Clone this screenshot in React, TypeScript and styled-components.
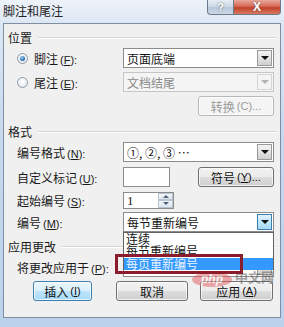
import React from 'react';
import styled, { createGlobalStyle } from 'styled-components';

const GlobalStyle = createGlobalStyle`
  html, body {
    margin: 0;
    padding: 0;
    background: #cfdff0;
  }
  body {
    font-family: 'Noto Sans CJK SC', 'Liberation Sans', sans-serif;
    font-size: 12px;
    color: #1a1a1a;
  }
`;

const Window = styled.div`
  position: relative;
  width: 284px;
  height: 327px;
  overflow: hidden;
  background: linear-gradient(180deg, #eef3f9 0px, #dce7f4 24px, #c6d8ee 140px, #bcd2ec 327px);
  display: flex;
  flex-direction: column;
`;

const TitleBar = styled.div`
  height: 23px;
  display: flex;
  align-items: flex-start;
  justify-content: space-between;
  padding-left: 3px;
  box-sizing: border-box;
`;

const Title = styled.div`
  font-size: 12px;
  line-height: 22px;
  color: #222;
`;

const Caps = styled.div`
  display: flex;
  margin-right: 3px;
`;

const CapButton = styled.div<{ $close?: boolean }>`
  width: ${p => (p.$close ? 47 : 27)}px;
  height: 15px;
  box-sizing: border-box;
  border: 1px solid #6d7a8c;
  border-top: none;
  border-left: ${p => (p.$close ? 'none' : '1px solid #6d7a8c')};
  border-radius: ${p => (p.$close ? '0 0 4px 0' : '0 0 0 4px')};
  background: ${p =>
    p.$close
      ? 'linear-gradient(180deg, #e9a99c 0%, #d46a55 45%, #c1412a 55%, #d9795f 100%)'
      : 'linear-gradient(180deg, #e7edf5 0%, #cfdae7 45%, #b9c8da 55%, #cbd8e7 100%)'};
  color: #fff;
  font-family: 'Liberation Sans', sans-serif;
  font-weight: bold;
  font-size: ${p => (p.$close ? 12 : 11)}px;
  line-height: 14px;
  text-align: center;
  text-shadow: 0 0 2px #555;
`;

const Panel = styled.div`
  margin: 0 3px;
  height: 295px;
  box-sizing: border-box;
  border: 1px solid #7f8ea3;
  background: #f0f0f0;
  display: flex;
  flex-direction: column;
  position: relative;
`;

const SectionHead = styled.div<{ $top: number }>`
  margin-top: ${p => p.$top}px;
  height: 16px;
  display: flex;
  align-items: center;
  padding-left: 4px;
  padding-right: 4px;
  gap: 6px;
  line-height: 16px;

  &::after {
    content: '';
    flex: 1;
    height: 0;
    border-top: 1px solid #d5d5d5;
    border-bottom: 1px solid #ffffff;
  }
`;

const Row = styled.div<{ $top: number; $h?: number }>`
  margin-top: ${p => p.$top}px;
  height: ${p => p.$h ?? 20}px;
  display: grid;
  grid-template-columns: 119px 151px;
  align-items: center;
  position: relative;
`;

const Label = styled.div`
  padding-left: 13px;
  display: flex;
  align-items: center;
  gap: 6px;
  white-space: nowrap;
`;

const Key = styled.span`
  font-family: 'Liberation Sans', sans-serif;
  font-size: 11px;
  margin-left: 2px;
`;

const Radio = styled.span<{ $checked?: boolean }>`
  width: 11px;
  height: 11px;
  border-radius: 50%;
  box-sizing: border-box;
  border: 1px solid #8e9aa8;
  background: radial-gradient(circle at 50% 40%, #ffffff 0%, #e8ecf0 70%, #cfd5dc 100%);
  position: relative;

  &::after {
    content: '';
    display: ${p => (p.$checked ? 'block' : 'none')};
    position: absolute;
    left: 2px;
    top: 2px;
    width: 5px;
    height: 5px;
    border-radius: 50%;
    background: radial-gradient(circle at 40% 35%, #a6d4f5 0%, #2b73b3 60%, #1a4f86 100%);
  }
`;

const Select = styled.div<{ $disabled?: boolean }>`
  height: 20px;
  box-sizing: border-box;
  border: 1px solid ${p => (p.$disabled ? '#c6c6c6' : '#8c8c8c')};
  background: ${p => (p.$disabled ? '#f4f4f4' : '#ffffff')};
  color: ${p => (p.$disabled ? '#8a8a8a' : '#111')};
  display: flex;
  align-items: center;
  justify-content: space-between;
  padding: 0 1px 0 3px;
  white-space: nowrap;
`;

const Arrow = styled.span<{ $state?: 'normal' | 'hot' | 'disabled' }>`
  width: 15px;
  height: 16px;
  box-sizing: border-box;
  border: 1px solid
    ${p => (p.$state === 'hot' ? '#3c7fb1' : p.$state === 'disabled' ? '#d6d6d6' : '#9a9a9a')};
  background: ${p =>
    p.$state === 'hot'
      ? 'linear-gradient(180deg, #e6f4fc 0%, #bee6fd 50%, #a7d9f5 100%)'
      : p.$state === 'disabled'
      ? '#f4f4f4'
      : 'linear-gradient(180deg, #f2f2f2 0%, #e4e4e4 50%, #d0d0d0 100%)'};
  display: flex;
  align-items: center;
  justify-content: center;

  &::after {
    content: '';
    border-left: 4px solid transparent;
    border-right: 4px solid transparent;
    border-top: 4px solid ${p => (p.$state === 'disabled' ? '#b4b4b4' : '#111')};
  }
`;

const Button = styled.div<{ $width: number; $left?: number; $default?: boolean; $disabled?: boolean }>`
  width: ${p => p.$width}px;
  margin-left: ${p => p.$left ?? 0}px;
  height: 20px;
  box-sizing: border-box;
  border: 1px solid ${p => (p.$default ? '#3c7fb1' : p.$disabled ? '#b5b9bd' : '#707070')};
  border-radius: 3px;
  background: ${p =>
    p.$disabled
      ? '#f4f4f4'
      : p.$default
      ? 'linear-gradient(180deg, #eaf6fd 0%, #d9f0fc 50%, #bee6fd 50%, #a7d9f5 100%)'
      : 'linear-gradient(180deg, #f2f2f2 0%, #ebebeb 50%, #dddddd 50%, #cfcfcf 100%)'};
  box-shadow: inset 0 0 0 1px rgba(255, 255, 255, 0.7);
  color: ${p => (p.$disabled ? '#9a9a9a' : '#111')};
  display: flex;
  align-items: center;
  justify-content: center;
  white-space: nowrap;
`;

const Right = styled.div`
  display: flex;
  justify-content: space-between;
  align-items: center;
`;

const TextBox = styled.div`
  width: 47px;
  height: 20px;
  box-sizing: border-box;
  border: 1px solid #8c8c8c;
  background: #fff;
`;

const Spinner = styled.div`
  width: 51px;
  height: 17px;
  box-sizing: border-box;
  border: 1px solid #8c8c8c;
  background: #fff;
  display: flex;
  justify-content: space-between;
  padding-left: 3px;
  line-height: 15px;
  font-family: 'Liberation Serif', serif;
  font-size: 13px;
`;

const SpinButtons = styled.div`
  width: 15px;
  display: flex;
  flex-direction: column;
`;

const SpinPart = styled.span<{ $down?: boolean }>`
  flex: 1;
  box-sizing: border-box;
  border: 1px solid #b8c4d0;
  background: linear-gradient(180deg, #f3f7fb 0%, #dde6ef 100%);
  display: flex;
  align-items: center;
  justify-content: center;

  &::after {
    content: '';
    border-left: 3px solid transparent;
    border-right: 3px solid transparent;
    ${p => (p.$down ? 'border-top: 3px solid #4d6178;' : 'border-bottom: 3px solid #4d6178;')}
  }
`;

const DropList = styled.div`
  position: absolute;
  left: 119px;
  top: 20px;
  width: 151px;
  height: 38px;
  box-sizing: border-box;
  border: 1px solid #646464;
  border-bottom: none;
  background: #fff;
  z-index: 2;
  display: flex;
  flex-direction: column;
`;

const Item = styled.div<{ $selected?: boolean }>`
  height: 12px;
  line-height: 12px;
  margin-top: ${p => (p.$selected ? 1 : 0)}px;
  padding-left: 2px;
  background: ${p => (p.$selected ? '#3399ff' : 'transparent')};
  color: ${p => (p.$selected ? '#e8f2ff' : '#111')};
  white-space: nowrap;
`;

const Marker = styled.div`
  position: absolute;
  left: 111px;
  top: 42px;
  width: 128px;
  height: 20px;
  box-sizing: border-box;
  border: 3px solid #8b1c2c;
  z-index: 3;
`;

const ButtonRow = styled.div`
  margin-top: 4px;
  display: flex;
  padding-left: 29px;
`;

const Watermark = styled.div`
  position: absolute;
  right: 6px;
  bottom: 33px;
  display: flex;
  align-items: flex-end;
  gap: 3px;
  opacity: 0.5;
  pointer-events: none;
`;

const PhpBadge = styled.span`
  width: 40px;
  height: 15px;
  margin-bottom: -3px;
  border-radius: 50%;
  background: #e25b5b;
  color: #fff;
  font-family: 'Liberation Sans', sans-serif;
  font-style: italic;
  font-weight: bold;
  font-size: 12px;
  line-height: 15px;
  text-align: center;
`;

const WaterText = styled.span`
  color: #555;
  font-size: 13px;
  line-height: 14px;
  font-weight: bold;
`;

const k = (c: string) => (
  <Key>
    (<u>{c}</u>):
  </Key>
);

export default function App() {
  return (
    <Window>
      <GlobalStyle />
      <TitleBar>
        <Title>脚注和尾注</Title>
        <Caps>
          <CapButton>?</CapButton>
          <CapButton $close>X</CapButton>
        </Caps>
      </TitleBar>
      <Panel>
        <SectionHead $top={6}>位置</SectionHead>
        <Row $top={2}>
          <Label>
            <Radio $checked />
            <span>脚注{k('F')}</span>
          </Label>
          <Select>
            页面底端
            <Arrow />
          </Select>
        </Row>
        <Row $top={4}>
          <Label>
            <Radio />
            <span>尾注{k('E')}</span>
          </Label>
          <Select $disabled>
            文档结尾
            <Arrow $state="disabled" />
          </Select>
        </Row>
        <Row $top={4}>
          <span />
          <Right>
            <span />
            <Button $width={76} $disabled>
              转换<Key>(C)...</Key>
            </Button>
          </Right>
        </Row>
        <SectionHead $top={8}>格式</SectionHead>
        <Row $top={2}>
          <Label>
            <span>编号格式{k('N')}</span>
          </Label>
          <Select>
            ①, ②, ③ …
            <Arrow />
          </Select>
        </Row>
        <Row $top={5}>
          <Label>
            <span>自定义标记{k('U')}</span>
          </Label>
          <Right>
            <TextBox />
            <Button $width={76}>
              符号
              <Key>
                (<u>Y</u>)...
              </Key>
            </Button>
          </Right>
        </Row>
        <Row $top={4} $h={18}>
          <Label>
            <span>起始编号{k('S')}</span>
          </Label>
          <div>
            <Spinner>
              1
              <SpinButtons>
                <SpinPart />
                <SpinPart $down />
              </SpinButtons>
            </Spinner>
          </div>
        </Row>
        <Row $top={3}>
          <Label>
            <span>编号{k('M')}</span>
          </Label>
          <Select>
            每节重新编号
            <Arrow $state="hot" />
          </Select>
          <DropList>
            <Item>连续</Item>
            <Item>每节重新编号</Item>
            <Item $selected>每页重新编号</Item>
          </DropList>
          <Marker />
        </Row>
        <SectionHead $top={7}>应用更改</SectionHead>
        <Row $top={2}>
          <Label>
            <span>将更改应用于{k('P')}</span>
          </Label>
          <Select>
            <span />
            <Arrow />
          </Select>
        </Row>
        <ButtonRow>
          <Button $width={59} $default>
            插入
            <Key>
              (<u>I</u>)
            </Key>
          </Button>
          <Button $width={72} $left={24}>
            取消
          </Button>
          <Button $width={73} $left={12}>
            应用
            <Key>
              (<u>A</u>)
            </Key>
          </Button>
        </ButtonRow>
        <Watermark>
          <PhpBadge>php</PhpBadge>
          <WaterText>中文网</WaterText>
        </Watermark>
      </Panel>
    </Window>
  );
}
